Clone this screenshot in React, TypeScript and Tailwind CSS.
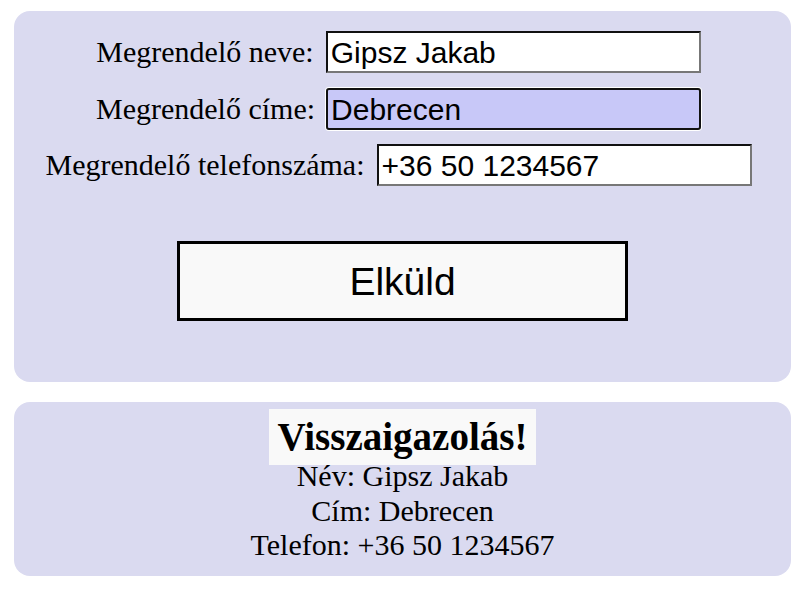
import React from "react";

const serif = "font-['Liberation_Serif','Times_New_Roman',serif]";
const sans = "font-['Liberation_Sans',Arial,sans-serif]";

export default function App() {
  return (
    <div className={`w-[808px] h-[597px] bg-white pt-[11px] ${serif} text-black`}>
      <div className="ml-[14px] w-[777px] h-[371px] rounded-[16px] bg-[#dadaf0] pt-[20px] flex flex-col items-center">
        <div className="flex items-center justify-center gap-[12px] pr-[8px] h-[42px]">
          <span className="text-[30px] leading-[34px]">Megrendelő neve:</span>
          <input
            readOnly
            value="Gipsz Jakab"
            className={`${sans} w-[375px] h-[42px] px-[3px] text-[30px] bg-white border-2 border-t-[#111111] border-l-[#111111] border-r-[#777777] border-b-[#777777] outline-none`}
          />
        </div>
        <div className="flex items-center justify-center gap-[11px] pr-[8px] h-[42px] mt-[15px]">
          <span className="text-[30px] leading-[34px]">Megrendelő címe:</span>
          <input
            readOnly
            value="Debrecen"
            className={`${sans} w-[375px] h-[42px] px-[3px] text-[30px] bg-[#c8c8f8] border-2 border-[#111111] rounded-[3px] shadow-[0_0_0_1px_#ffffff] outline-none`}
          />
        </div>
        <div className="flex items-center justify-center gap-[12px] pr-[8px] h-[42px] mt-[14px]">
          <span className="text-[30px] leading-[34px]">Megrendelő telefonszáma:</span>
          <input
            readOnly
            value="+36 50 1234567"
            className={`${sans} w-[375px] h-[42px] px-[3px] text-[30px] bg-white border-2 border-t-[#111111] border-l-[#111111] border-r-[#777777] border-b-[#777777] outline-none`}
          />
        </div>
        <button
          className={`${sans} mt-[55px] w-[451px] h-[80px] border-[3px] border-black bg-[#f9f9f9] text-[39px] leading-none flex items-center justify-center`}
        >
          Elküld
        </button>
      </div>
      <div className="ml-[14px] mt-[20px] w-[777px] rounded-[16px] bg-[#dadaf0] pt-[12px] pb-[13px] text-center">
        <div className="h-[45px] flex items-center justify-center">
          <span className="bg-[#f9f9f9] px-[9px] h-[56px] flex items-center text-[39px] font-bold leading-none">
            Visszaigazolás!
          </span>
        </div>
        <div className="text-[30px] leading-[34.5px]">Név: Gipsz Jakab</div>
        <div className="text-[30px] leading-[34.5px]">Cím: Debrecen</div>
        <div className="text-[30px] leading-[34.5px]">Telefon: +36 50 1234567</div>
      </div>
    </div>
  );
}
